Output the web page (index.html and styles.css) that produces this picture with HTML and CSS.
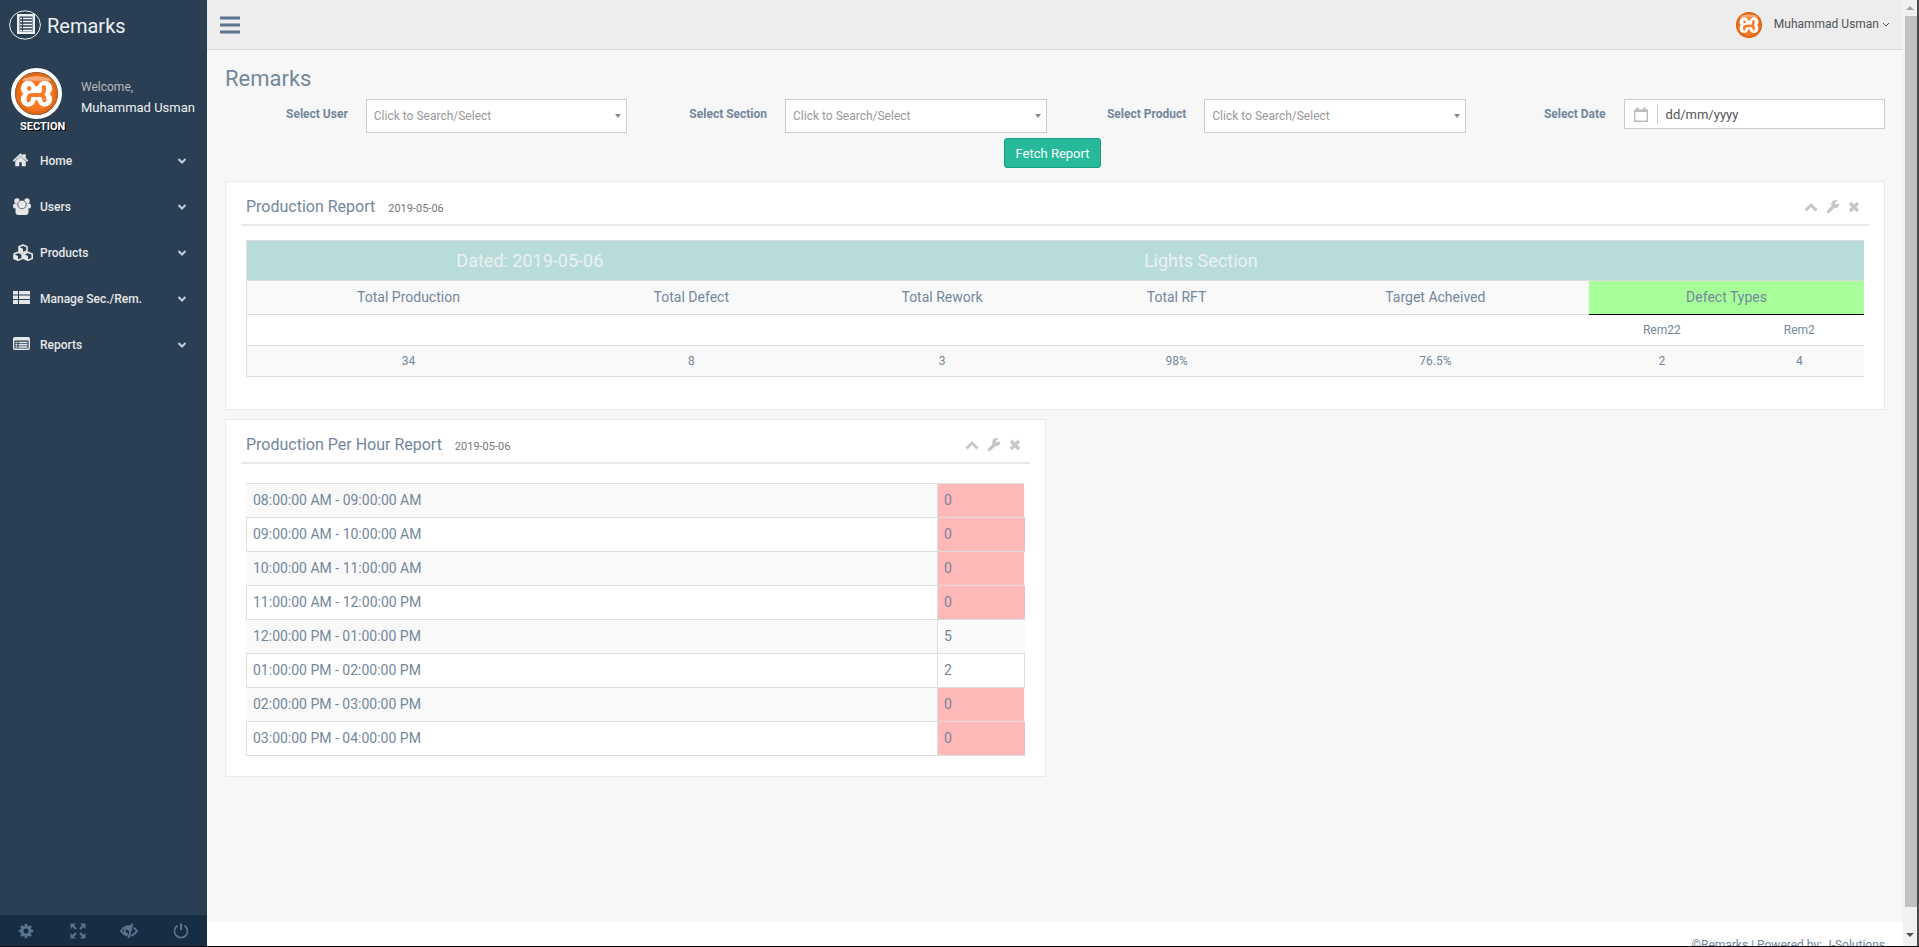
FILE: index.html
```html
<!DOCTYPE html>
<html lang="en">
<head>
<meta charset="utf-8">
<title>Remarks</title>
<link rel="stylesheet" href="styles.css">
</head>
<body>
<svg class="defs" aria-hidden="true">
  <defs>
    <radialGradient id="orange" cx="50%" cy="50%" r="50%">
      <stop offset="0.7" stop-color="#fb7a24"/>
      <stop offset="1" stop-color="#d2600f"/>
    </radialGradient>
    <symbol id="i-xampp" viewBox="0 0 44 44">
      <circle cx="22" cy="22" r="22" fill="url(#orange)"/>
      <path d="M9 6.500Q22 2 35 6.500L37 9H7Z" fill="#f9a878"/>
      <g fill="#fff"><circle cx="13.500" cy="16.500" r="7.500"/><circle cx="30.500" cy="16.500" r="7.500"/><circle cx="13.500" cy="28" r="7.500"/><circle cx="30.500" cy="28" r="7.500"/><rect x="12" y="14.500" width="20" height="14.500"/></g>
      <circle cx="14.500" cy="16.800" r="2.300" fill="#fb7a24"/>
      <path d="M14 29V27Q14 23.500 18 23.500H26.500Q30.500 22 29.500 15.500M27.500 23.500Q30.500 25 30 29" fill="none" stroke="#fb7a24" stroke-width="4.200" stroke-linecap="round"/>
    </symbol>
    <symbol id="i-chev" viewBox="0 0 10 8"><path d="M1.500 2L5 5.500L8.500 2" fill="none" stroke="currentColor" stroke-width="2"/></symbol>
    <symbol id="i-up" viewBox="0 0 14 12"><path d="M1.500 9.500L7 4L12.500 9.500" fill="none" stroke="currentColor" stroke-width="3"/></symbol>
    <symbol id="i-wrench" viewBox="0 0 14 14"><path d="M2.400 11.600L8 6" fill="none" stroke="currentColor" stroke-width="3.200" stroke-linecap="round"/><path d="M12.800 3.200L10.500 4.600L9.200 3.600L9.400 2.200L11.600 .8A4 4 0 1 0 13.300 4Z" fill="currentColor"/></symbol>
    <symbol id="i-x" viewBox="0 0 12 12"><path d="M2 2L10 10M10 2L2 10" stroke="currentColor" stroke-width="3.400"/></symbol>
  </defs>
</svg>

<div class="app">
  <aside class="sidebar">
    <a class="brand" href="#">
      <svg width="32" height="30" viewBox="0 0 32 30"><ellipse cx="16" cy="15" rx="15.400" ry="14.200" fill="none" stroke="#ecf0f1"/><path d="M8 4H26V24H8Z" fill="#ecf0f1"/><path d="M10.500 6.500H23.500V21.500H10.500Z" fill="#2a3f54"/><path d="M11 8.500H13M14 8.500H23M11 11.500H13M14 11.500H23M11 14.500H13M14 14.500H23M11 17.500H13M14 17.500H23M11 20.500H13M14 20.500H23" stroke="#ecf0f1" stroke-width="1.500"/></svg>
      <span>Remarks</span>
    </a>
    <div class="profile">
      <svg class="avatar" width="43" height="43"><use href="#i-xampp"/></svg>
      <div class="who"><span>Welcome,</span><strong>Muhammad Usman</strong></div>
    </div>
    <h3 class="section-name">SECTION</h3>
    <nav class="menu">
      <a href="#"><svg class="mi" width="20" height="18" viewBox="0 0 20 18"><path d="M0 8.500L7.500 1.500L10 3.800V2.500H12.500V6.100L15 8.500L14 9.500L7.500 3.700L1 9.500Z M2.500 9.200L7.500 4.600L12.500 9.200V14H9V10H6V14H2.500Z" fill="currentColor" stroke="currentColor" stroke-width=".5"/></svg><span>Home</span><svg class="chev" width="10" height="8"><use href="#i-chev"/></svg></a>
      <a href="#"><svg class="mi" width="20" height="18" viewBox="0 0 20 18"><g fill="currentColor"><circle cx="4" cy="3" r="2.700"/><circle cx="14" cy="3" r="2.700"/><rect x="0" y="5.500" width="5.500" height="5" rx="2"/><rect x="12.500" y="5.500" width="5.500" height="5" rx="2"/><rect x="2.500" y="9" width="13" height="8" rx="3"/><circle cx="9" cy="6.500" r="4.300" stroke="#2a3f54" stroke-width=".7"/></g></svg><span>Users</span><svg class="chev" width="10" height="8"><use href="#i-chev"/></svg></a>
      <a href="#"><svg class="mi" width="20" height="18" viewBox="0 0 20 18"><g fill="#2a3f54" stroke="currentColor" stroke-width="1.600" stroke-linejoin="round"><path d="M10 1L14 2.700V7L10 8.800L6 7V2.700Z"/><path d="M5 8.200L9.200 10V14.500L5 16.200L1 14.500V10Z"/><path d="M15 8.200L19.200 10V14.500L15 16.200L10.800 14.500V10Z"/></g><path d="M6 3L10 4.700V9L6 7ZM1 10L5 12V16L1 14.500ZM10.800 10L15 12V16L10.800 14.500Z" fill="currentColor"/></svg><span>Products</span><svg class="chev" width="10" height="8"><use href="#i-chev"/></svg></a>
      <a href="#"><svg class="mi" width="20" height="18" viewBox="0 0 20 18"><path d="M0 1H5V4.500H0ZM6 1H17V4.500H6ZM0 5.500H5V9H0ZM6 5.500H17V9H6ZM0 10H5V14H0ZM6 10H17V14H6Z" fill="currentColor"/></svg><span>Manage Sec./Rem.</span><svg class="chev" width="10" height="8"><use href="#i-chev"/></svg></a>
      <a href="#"><svg class="mi" width="20" height="18" viewBox="0 0 20 18"><rect x=".7" y="1.700" width="15.600" height="11.600" rx="1.200" fill="none" stroke="currentColor" stroke-width="1.400"/><path d="M1 1.500H16V4.500H1Z" fill="currentColor"/><path d="M2.500 6.500H4.500M5.500 6.500H14.500M2.500 8.800H4.500M5.500 8.800H14.500M2.500 11H4.500M5.500 11H14.500" stroke="currentColor" stroke-width="1.500"/></svg><span>Reports</span><svg class="chev" width="10" height="8"><use href="#i-chev"/></svg></a>
    </nav>
    <div class="tools">
      <button type="button" aria-label="Settings"><svg width="16" height="16" viewBox="0 0 16 16"><circle cx="8" cy="8" r="4" fill="none" stroke="currentColor" stroke-width="3"/><path d="M8 .8V4M8 12V15.200M.8 8H4M12 8H15.200M3 3L5 5M11 11L13 13M13 3L11 5M3 13L5 11" stroke="currentColor" stroke-width="2.600"/></svg></button>
      <button type="button" aria-label="Full screen"><svg width="16" height="16" viewBox="0 0 16 16"><path d="M.5 .5H6L.5 6ZM15.500 .5V6L10 .5ZM.5 15.500V10L6 15.500ZM15.500 15.500H10L15.500 10Z" fill="currentColor"/><path d="M2.500 2.500L6 6M13.500 2.500L10 6M2.500 13.500L6 10M13.500 13.500L10 10" stroke="currentColor" stroke-width="2.200"/></svg></button>
      <button type="button" aria-label="Lock"><svg width="18" height="16" viewBox="0 0 18 16"><path d="M10 3.200Q4 3 1 8Q3.500 11.800 7.500 12.600M13.500 4.500Q15.500 6 17 8Q14.500 12 10.500 12.800" fill="none" stroke="currentColor" stroke-width="1.800"/><path d="M6 5.500A3 3 0 0 0 8 11" fill="none" stroke="currentColor" stroke-width="2"/><path d="M12.500 .5L8.500 15" stroke="currentColor" stroke-width="1.800"/><path d="M12 1L5 5L10 9Z" fill="currentColor"/></svg></button>
      <button type="button" aria-label="Logout"><svg width="16" height="16" viewBox="0 0 16 16"><path d="M4.700 2.600A6.500 6.500 0 1 0 11.300 2.600" fill="none" stroke="currentColor" stroke-width="1.700"/><path d="M8 .5V7" stroke="currentColor" stroke-width="2"/></svg></button>
    </div>
  </aside>

  <div class="main">
    <header class="topbar">
      <button class="toggle" type="button" aria-label="Toggle menu"><svg width="20" height="18" viewBox="0 0 20 18"><path d="M0 2H20M0 9H20M0 16H20" stroke="currentColor" stroke-width="3"/></svg></button>
      <a class="user" href="#"><svg width="26" height="26"><use href="#i-xampp"/></svg><span>Muhammad Usman</span><svg width="8" height="6" viewBox="0 0 8 6"><path d="M1 1L4 4L7 1" fill="none" stroke="currentColor"/></svg></a>
    </header>

    <main class="content">
      <h1>Remarks</h1>
      <form class="filters">
        <div class="field"><label for="f-user">Select User</label><div class="control"><select id="f-user"><option>Click to Search/Select</option></select><i class="caret"></i></div></div>
        <div class="field"><label for="f-section">Select Section</label><div class="control"><select id="f-section"><option>Click to Search/Select</option></select><i class="caret"></i></div></div>
        <div class="field"><label for="f-product">Select Product</label><div class="control"><select id="f-product"><option>Click to Search/Select</option></select><i class="caret"></i></div></div>
        <div class="field"><label for="f-date">Select Date</label><div class="control date"><span class="cal"><svg width="14" height="15" viewBox="0 0 14 15"><path d="M.7 3.500V14.300H13.300V3.500" fill="none" stroke="currentColor" stroke-width="1.400"/><path d="M0 2.500H14V5H0Z" fill="currentColor"/><path d="M3.500 .5V4M10.500 .5V4" stroke="currentColor" stroke-width="2.400"/></svg></span><input id="f-date" type="text" value="dd/mm/yyyy"></div></div>
        <button class="fetch" type="button">Fetch Report</button>
      </form>

      <section class="panel">
        <header class="title"><h2>Production Report <small>2019-05-06</small></h2>
          <div class="box-tools"><button type="button" aria-label="Collapse"><svg width="14" height="12"><use href="#i-up"/></svg></button><button type="button" aria-label="Options"><svg width="14" height="14"><use href="#i-wrench"/></svg></button><button type="button" aria-label="Close"><svg width="12" height="12"><use href="#i-x"/></svg></button></div>
        </header>
        <table class="report">
          <colgroup><col class="c1"><col class="c2"><col class="c3"><col class="c4"><col class="c5"><col class="c6"><col class="c7"></colgroup>
          <tbody>
            <tr class="band"><th colspan="2">Dated: 2019-05-06</th><th colspan="3">Lights Section</th><th colspan="2"></th></tr>
            <tr class="heads"><th>Total Production</th><th>Total Defect</th><th>Total Rework</th><th>Total RFT</th><th>Target Acheived</th><th class="types" colspan="2">Defect Types</th></tr>
            <tr class="names"><td></td><td></td><td></td><td></td><td></td><td>Rem22</td><td>Rem2</td></tr>
            <tr class="totals"><td>34</td><td>8</td><td>3</td><td>98%</td><td>76.5%</td><td>2</td><td>4</td></tr>
          </tbody>
        </table>
      </section>

      <div class="half">
        <section class="panel">
          <header class="title"><h2>Production Per Hour Report <small>2019-05-06</small></h2>
            <div class="box-tools"><button type="button" aria-label="Collapse"><svg width="14" height="12"><use href="#i-up"/></svg></button><button type="button" aria-label="Options"><svg width="14" height="14"><use href="#i-wrench"/></svg></button><button type="button" aria-label="Close"><svg width="12" height="12"><use href="#i-x"/></svg></button></div>
          </header>
          <table class="hours">
            <tbody>
              <tr><td>08:00:00 AM - 09:00:00 AM</td><td class="zero">0</td></tr>
              <tr><td>09:00:00 AM - 10:00:00 AM</td><td class="zero">0</td></tr>
              <tr><td>10:00:00 AM - 11:00:00 AM</td><td class="zero">0</td></tr>
              <tr><td>11:00:00 AM - 12:00:00 PM</td><td class="zero">0</td></tr>
              <tr><td>12:00:00 PM - 01:00:00 PM</td><td>5</td></tr>
              <tr><td>01:00:00 PM - 02:00:00 PM</td><td>2</td></tr>
              <tr><td>02:00:00 PM - 03:00:00 PM</td><td class="zero">0</td></tr>
              <tr><td>03:00:00 PM - 04:00:00 PM</td><td class="zero">0</td></tr>
            </tbody>
          </table>
        </section>
      </div>
    </main>
    <footer class="foot">©Remarks | Powered by: <a href="#">J-Solutions</a></footer>
  </div>

  <div class="scroll" aria-hidden="true">
    <svg width="8" height="16" viewBox="0 0 8 16"><path d="M0 10L4 6L8 10Z" fill="#a3a3a3"/></svg>
    <div class="thumb"></div>
    <svg class="down" width="8" height="16" viewBox="0 0 8 16"><path d="M0 3L4 7L8 3Z" fill="#505050"/></svg>
  </div>
</div>
</body>
</html>
```

FILE: styles.css
```css
* { box-sizing: border-box; }
body { margin: 0; font: 12px/19px Roboto, "Liberation Sans", sans-serif; color: #73879c; background: #2a3f54; }
h1, h2, h3 { margin: 0; font-weight: 400; }
a { color: inherit; text-decoration: none; }
button { padding: 0; border: 0; background: none; color: inherit; font: inherit; display: flex; align-items: center; justify-content: center; }
svg { display: block; flex: none; }
.defs { position: absolute; width: 0; height: 0; }

.app { display: grid; grid-template-columns: 207px 1fr 16px; height: 100vh; border-bottom: 1px solid #120a0c; overflow: hidden; }

.sidebar { display: flex; flex-direction: column; min-height: 0; background: #2a3f54; color: #e7e7e7; }
.brand { display: flex; align-items: center; gap: 6px; height: 49px; padding-left: 9px; font-size: 20px; color: #ecf0f1; }
.brand span { padding-top: 4px; }
.profile { display: flex; align-items: center; gap: 19px; padding: 19px 0 0 11px; }
.avatar { box-sizing: content-box; border: 4px solid #fff; border-radius: 50%; }
.who { display: flex; flex-direction: column; padding-top: 6px; font-size: 13px; color: #ecf0f1; }
.who span { font-size: 12px; line-height: 21px; color: #bab8b8; }
.who strong { font-weight: 400; white-space: nowrap; }
.section-name { padding-left: 20px; font-size: 11px; line-height: 16px; font-weight: 700; color: #fff; text-shadow: 1px 1px #000; }
.menu { display: flex; flex-direction: column; padding-top: 3px; }
.menu a { display: flex; align-items: center; height: 46px; padding: 0 20px 0 13px; font-weight: 500; }
.menu span { flex: 1; }
.mi { margin-right: 7px; }
.chev { color: #c4cfda; }
.tools { display: grid; grid-template-columns: repeat(4, 1fr); height: 31px; margin-top: auto; background: #172d44; color: #5a738e; }

.main { display: flex; flex-direction: column; min-width: 0; min-height: 0; overflow: hidden; background: #f7f7f7; }
.topbar { display: flex; flex: none; align-items: center; justify-content: space-between; height: 50px; padding: 0 13px; background: #ededed; border-bottom: 1px solid #d9dee4; }
.toggle { color: #5a738e; }
.user { display: flex; align-items: center; color: #515356; }
.user span { margin: 0 3px 0 12px; }
.content { flex: 1 0 auto; padding: 16px 18px 0; min-height: calc(100vh - 75px); }
.content h1 { font-size: 22px; line-height: 26px; }

.filters { display: grid; grid-template-columns: repeat(4, 1fr); column-gap: 17px; padding-top: 7px; }
.field { display: flex; align-items: flex-start; }
.field label { flex: 1; padding: 6px 18px 0 0; text-align: right; font-weight: 700; }
.control { position: relative; width: 65%; }
select { appearance: none; display: block; width: 100%; height: 34px; padding: 0 7px; border: 1px solid #ccc; border-radius: 0; background: #fff; color: #999; font: inherit; }
.caret { position: absolute; right: 6px; top: 15px; border: 3px solid transparent; border-top: 4px solid #888; border-bottom: 0; }
.date { display: flex; align-items: center; height: 30px; border: 1px solid #ccc; background: #fff; }
.cal { display: flex; align-items: center; justify-content: center; width: 33px; height: 20px; border-right: 1px solid #ccc; color: #bbb; }
.date input { flex: 1; min-width: 0; padding: 0 8px; border: 0; background: none; color: #555; font: inherit; font-size: 13px; }
.fetch { grid-column: 1 / -1; justify-self: center; height: 30px; margin: 5px 5px 0 0; padding: 0 11px; border: 1px solid #169f85; border-radius: 3px; background: #26b99a; color: #fff; font-size: 13px; }

.panel { padding: 10px 15px 0; background: #fff; border: 1px solid #e6e9ed; }
.filters + .panel { margin-top: 13px; padding-bottom: 32px; }
.title { display: flex; align-items: center; justify-content: space-between; height: 34px; padding: 0 9px 2px 5px; border-bottom: 2px solid #e6e9ed; }
.title h2 { font-size: 16px; }
.title small { margin-left: 9px; font-size: 11px; color: #777; }
.box-tools { display: flex; gap: 8px; color: #c5c7cb; }
table { width: calc(100% - 10px); margin-left: 5px; border-collapse: collapse; }
th, td { padding: 0; font-weight: 400; border: 1px solid #ddd; }
.report { margin-top: 14px; table-layout: fixed; text-align: center; }
.report th, .report td { border-width: 1px 0; }
.report tr > :first-child { border-left-width: 1px; }
.band > *, .types { border-right-width: 1px; }
.band > th { border-right-color: #b8dcd9; }
.c1 { width: 20%; } .c2 { width: 15%; } .c3 { width: 16%; } .c4 { width: 13%; } .c5 { width: 19%; } .c6 { width: 9%; } .c7 { width: 8%; }
.band { height: 40px; background: #b8dcd9; color: #ecf0f1; font-size: 18px; }
.heads { height: 34px; background: #f9f9f9; font-size: 14px; }
.names, .totals { height: 31px; }
.totals, .hours tr:nth-child(odd) { background: #f9f9f9; }
.report .types { background: #a6ff99; border-bottom: 1px solid #000; }
.half { width: calc(50% - 9px); padding-top: 9px; }
.half .panel { padding-bottom: 20px; }
.hours { margin-top: 19px; font-size: 14px; }
.hours td { height: 34px; padding: 0 6px; }
.hours td:last-child { width: 87px; }
.hours tr:nth-child(odd) td:first-child { border-left-color: #f9f9f9; }
.hours tr:nth-child(odd) td:last-child { border-right-color: #f9f9f9; }
.hours tr .zero:last-child { background: #ffb8b8; border-right-color: #ffb8b8; }
.foot { flex: none; padding: 14px 18px; background: #fff; text-align: right; }

.scroll { display: flex; flex-direction: column; align-items: center; background: #f1f1f1; border-right: 2px solid #4b4b4b; }
.thumb { align-self: stretch; flex: 1; margin-left: 2px; background: #c1c1c1; }
.down { margin-top: 23px; }
```
